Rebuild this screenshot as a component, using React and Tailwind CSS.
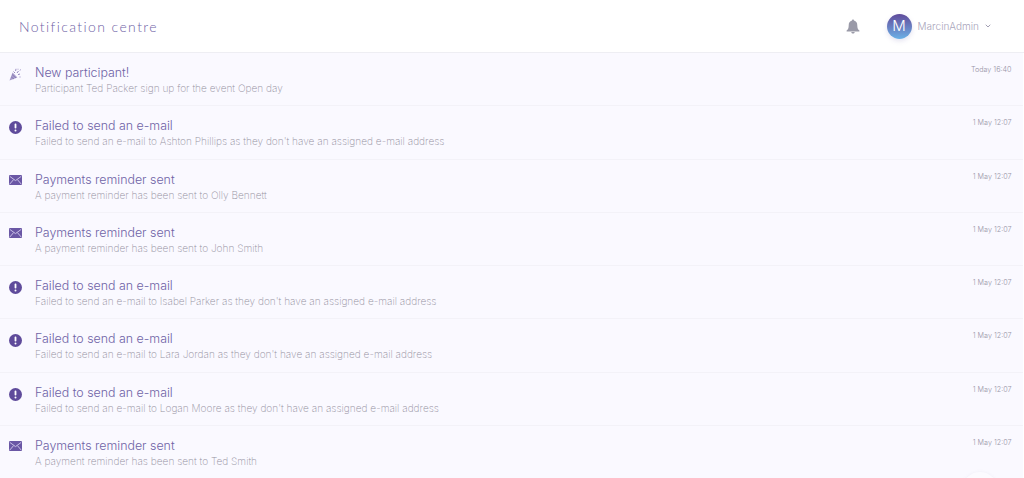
import React from 'react';
import { ChevronDown } from 'lucide-react';

const failedText = (name) =>
  `Failed to send an e-mail to ${name} as they don't have an assigned e-mail address`;

const rows = [
  { icon: 'party', title: 'New participant!', text: 'Participant Ted Packer sign up for the event Open day', date: 'Today 16:40' },
  { icon: 'alert', title: 'Failed to send an e-mail', text: failedText('Ashton Phillips'), date: '1 May 12:07' },
  { icon: 'mail', title: 'Payments reminder sent', text: 'A payment reminder has been sent to Olly Bennett', date: '1 May 12:07' },
  { icon: 'mail', title: 'Payments reminder sent', text: 'A payment reminder has been sent to John Smith', date: '1 May 12:07' },
  { icon: 'alert', title: 'Failed to send an e-mail', text: failedText('Isabel Parker'), date: '1 May 12:07' },
  { icon: 'alert', title: 'Failed to send an e-mail', text: failedText('Lara Jordan'), date: '1 May 12:07' },
  { icon: 'alert', title: 'Failed to send an e-mail', text: failedText('Logan Moore'), date: '1 May 12:07' },
  { icon: 'mail', title: 'Payments reminder sent', text: 'A payment reminder has been sent to Ted Smith', date: '1 May 12:07' },
];

function RowIcon({ type }) {
  if (type === 'alert') {
    return (
      <svg width="13" height="13" viewBox="0 0 13 13">
        <circle cx="6.5" cy="6.5" r="6.5" fill="#5f4b9b" />
        <rect x="5.6" y="2.6" width="1.8" height="5" rx="0.8" fill="#fff" />
        <circle cx="6.5" cy="9.6" r="1" fill="#fff" />
      </svg>
    );
  }
  if (type === 'mail') {
    return (
      <svg width="13" height="10" viewBox="0 0 13 10">
        <rect width="13" height="10" rx="1" fill="#6a57a5" />
        <path d="M0.8 1.4 L6.5 5.6 L12.2 1.4 M0.8 9 L4.6 4.6 M12.2 9 L8.4 4.6" fill="none" stroke="#c9c0e6" strokeWidth="1" />
      </svg>
    );
  }
  return (
    <svg width="13" height="13" viewBox="0 0 13 13">
      <path d="M0.5 12.5 L3.6 4.6 L8.4 9.4 Z" fill="#a79cca" />
      <path d="M2.2 9 L5 11 M3 6.5 L7 10" stroke="#7d6fb0" strokeWidth="0.7" fill="none" />
      <path d="M4.5 3.5 L6 5 M7 0.8 L6.6 3 M9.5 3 L8 5 M11 6 L9 6.6 M11.5 1.5 L11 2.5" stroke="#8a7db8" strokeWidth="0.9" fill="none" />
      <circle cx="11" cy="9" r="0.7" fill="#b5abd4" />
      <circle cx="9" cy="1.2" r="0.6" fill="#b5abd4" />
    </svg>
  );
}

export default function App() {
  return (
    <div className="relative h-[478px] overflow-hidden bg-white font-['Inter',sans-serif]">
      <header className="flex h-[53px] items-center border-b border-[#eeeef3] pl-[19px] pr-[32px]">
        <h1 className="font-['Lato',sans-serif] text-[14px] font-light tracking-[1.4px] text-[#6f63a6]">
          Notification centre
        </h1>
        <svg className="ml-auto" width="14" height="15" viewBox="0 0 14 15">
          <path d="M7 0.5 C7.7 0.5 8 1 8 1.6 C10.3 2.2 11.3 4 11.3 6.4 C11.3 9 12 10.4 13.4 11.6 L13.4 12.4 L0.6 12.4 L0.6 11.6 C2 10.4 2.7 9 2.7 6.4 C2.7 4 3.7 2.2 6 1.6 C6 1 6.3 0.5 7 0.5 Z M5.3 13 L8.7 13 C8.6 14 7.9 14.6 7 14.6 C6.1 14.6 5.4 14 5.3 13 Z" fill="#9a9aa8" />
        </svg>
        <div className="ml-[27px] flex items-center">
          <div className="flex h-[25px] w-[25px] items-center justify-center rounded-full bg-gradient-to-b from-[#5f4b9b] to-[#69b0e6] text-[15px] font-light text-white shadow-[0_2px_5px_rgba(120,110,180,0.2)]">
            M
          </div>
          <span className="ml-[6px] font-['Inter',sans-serif] text-[10px] font-light text-[#a9a5bb]">MarcinAdmin</span>
          <ChevronDown className="ml-[5px] text-[#8f8ba3]" size={8} strokeWidth={2.5} />
        </div>
      </header>
      <ul className="mr-px">
        {rows.map((row, i) => (
          <li key={i} className="flex h-[53.3px] border-b border-[#f3f2f8] bg-[#faf9ff]">
            <div className="flex w-[35px] shrink-0 justify-center pt-[15px] pr-[4px]">
              <RowIcon type={row.icon} />
            </div>
            <div className="min-w-0 pt-[12px]">
              <p className="text-[12.4px] leading-[16px] font-light text-[#6f63a6]">{row.title}</p>
              <p className="text-[10.1px] leading-[14px] font-extralight text-[#96929f]">{row.text}</p>
            </div>
            <span className="ml-auto pt-[11px] pr-[11.5px] text-[7.2px] leading-[11px] font-light text-[#9793a6]">
              {row.date}
            </span>
          </li>
        ))}
      </ul>
      <div className="absolute top-[472px] left-[962px] h-[36px] w-[36px] rounded-full bg-[#fcfbff] shadow-[0_0_3px_rgba(210,210,225,0.25)]" />
    </div>
  );
}
